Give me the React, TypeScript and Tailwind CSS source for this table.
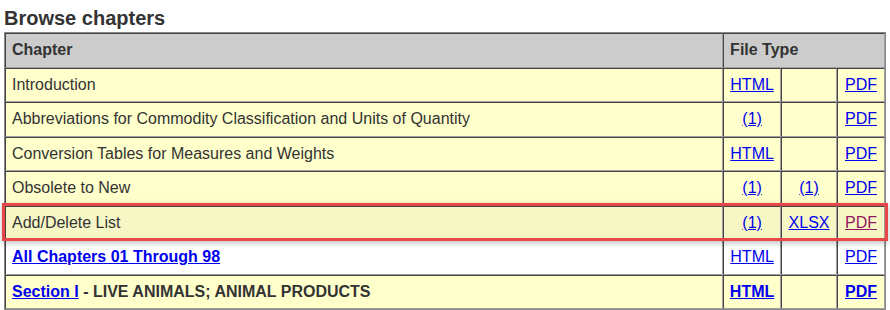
import React from "react";

type Row = {
  chapter: React.ReactNode;
  html?: string;
  mid?: string;
  pdf: boolean;
  bold?: boolean;
  white?: boolean;
  marked?: boolean;
};

const link = "text-[#0000ee] underline";

const ROWS: Row[] = [
  { chapter: "Introduction", html: "HTML", pdf: true },
  { chapter: "Abbreviations for Commodity Classification and Units of Quantity", html: "(1)", pdf: true },
  { chapter: "Conversion Tables for Measures and Weights", html: "HTML", pdf: true },
  { chapter: "Obsolete to New", html: "(1)", mid: "(1)", pdf: true },
  { chapter: "Add/Delete List", html: "(1)", mid: "XLSX", pdf: true, marked: true },
  {
    chapter: <a href="#" className={`${link} font-bold`}>All Chapters 01 Through 98</a>,
    html: "HTML",
    pdf: true,
    white: true,
  },
  {
    chapter: (
      <span className="font-bold">
        <a href="#" className={link}>Section I</a> - LIVE ANIMALS; ANIMAL PRODUCTS
      </span>
    ),
    html: "HTML",
    pdf: true,
    bold: true,
  },
];

// classic inset cell border: dark top/left, light bottom/right
const cell = "border border-t-[#444] border-l-[#444] border-b-[#a0a0a0] border-r-[#a0a0a0] h-[34.5px]";

export default function App() {
  return (
    <div className="bg-white px-1 pt-[6px] text-[#333]" style={{ fontFamily: '"Liberation Sans", Arial, sans-serif' }}>
      <h2 className="text-[20px] font-bold leading-[24px] mb-[2px]">Browse chapters</h2>
      <div className="relative w-[882px]">
        <table className="w-[882px] border-separate border-spacing-0 text-[16px] border border-[#888]">
          <thead>
            <tr className="bg-[#cccccc]">
              <th className={`${cell} text-left px-[6px] w-[720px]`}>Chapter</th>
              <th colSpan={3} className={`${cell} text-left px-[6px]`}>File Type</th>
            </tr>
          </thead>
          <tbody>
            {ROWS.map((r, i) => (
              <tr key={i} className={r.white ? "bg-white" : r.marked ? "bg-[#f7f7c6]" : "bg-[#ffffcc]"}>
                <td className={`${cell} px-[6px]`}>{r.chapter}</td>
                <td className={`${cell} text-center w-[58px]`}>
                  {r.html && <a href="#" className={`${link} ${r.bold ? "font-bold" : ""}`}>{r.html}</a>}
                </td>
                <td className={`${cell} text-center w-[56px]`}>
                  {r.mid && <a href="#" className={link}>{r.mid}</a>}
                </td>
                <td className={`${cell} text-center w-[48px]`}>
                  {r.pdf && (
                    <a
                      href="#"
                      className={`underline ${r.marked ? "text-[#93195e]" : "text-[#0000ee]"} ${r.bold ? "font-bold" : ""}`}
                    >
                      PDF
                    </a>
                  )}
                </td>
              </tr>
            ))}
          </tbody>
        </table>
        {/* highlight frame around the Add/Delete row */}
        <div className="pointer-events-none absolute left-[-2px] right-[-2px] top-[171px] h-[38px] border-[3px] border-[#e8474a] shadow-[0_2px_6px_rgba(0,0,0,0.25)]" />
      </div>
    </div>
  );
}
